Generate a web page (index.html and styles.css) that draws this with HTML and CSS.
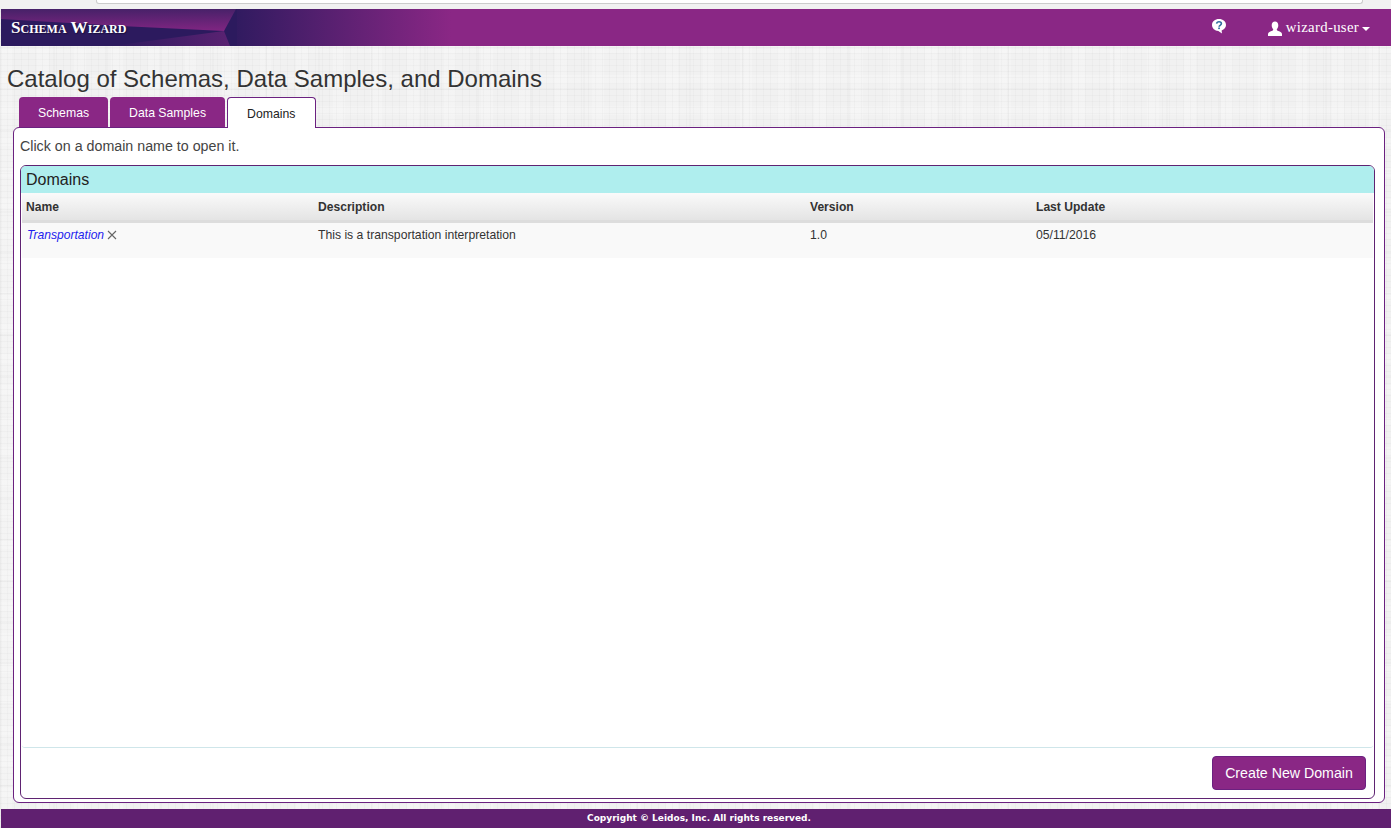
FILE: index.html
```html
<!DOCTYPE html>
<html lang="en">
<head>
  <meta charset="UTF-8">
  <meta name="viewport" content="width=device-width, initial-scale=1.0">
  <title>Schema Wizard</title>
  <link rel="stylesheet" href="styles.css">
</head>
<body>

  <div class="browser-strip"><div class="address-box"></div></div>

  <header class="navbar">
    <svg class="brand-art" viewBox="0 0 450 37" preserveAspectRatio="none" aria-hidden="true">
      <defs>
        <linearGradient id="fade" x1="0" x2="1" y1="0" y2="0">
          <stop offset="0" stop-color="#2c1a5e"/>
          <stop offset="1" stop-color="#8a2785"/>
        </linearGradient>
        <linearGradient id="wing" x1="0" x2="0.04" y1="0" y2="1">
          <stop offset="0" stop-color="#462168"/>
          <stop offset="1" stop-color="#7e2581"/>
        </linearGradient>
        <linearGradient id="wing-low" x1="0" x2="1" y1="0" y2="0">
          <stop offset="0" stop-color="#2c1a5e"/>
          <stop offset="1" stop-color="#5a2272"/>
        </linearGradient>
      </defs>
      <rect x="224" width="226" height="37" fill="url(#fade)"/>
      <rect width="236" height="37" fill="#2c1a5e"/>
      <polygon points="0,0 235,0 223,22 120,17 0,10" fill="url(#wing)"/>
      <polygon points="110,37 223,22 229,37" fill="url(#wing-low)"/>
    </svg>
    <a class="brand">Schema Wizard</a>
    <div class="nav-right">
      <svg class="help-icon" viewBox="0 0 16 16" aria-hidden="true">
        <path d="M8 1C4 1 1 3.500 1 7c0 3.300 2.800 5.800 6.300 5.900L11 15.500l-.4-3.100C13.300 11.300 15 9.400 15 7c0-3.500-3-6-7-6z" fill="#fff"/>
        <path d="M5.600 5.600C5.800 4.400 6.800 3.700 8 3.700c1.400 0 2.400.8 2.400 1.900 0 1.800-2.300 1.700-2.300 3.200" fill="none" stroke="#2f6d9e" stroke-width="1.600"/>
        <rect x="7.200" y="9.500" width="1.700" height="1.600" fill="#2f6d9e"/>
      </svg>
      <a class="user-menu">
        <svg class="user-icon" viewBox="0 0 16 16" aria-hidden="true">
          <path d="M8 .5c2 0 3.300 1.500 3.300 3.700 0 1.700-.7 3.100-1.500 4 0 1 .3 1.300 1.500 1.800 2 .8 3.700 1.400 3.700 3.200V15H1v-1.800c0-1.800 1.700-2.400 3.700-3.200 1.200-.5 1.500-.8 1.500-1.800-.8-.9-1.500-2.300-1.500-4C4.700 2 6 .5 8 .5z" fill="#fff"/>
        </svg>
        wizard-user<span class="caret"></span>
      </a>
    </div>
  </header>

  <main class="content">
    <h1>Catalog of Schemas, Data Samples, and Domains</h1>

    <ul class="tabs">
      <li class="tab">Schemas</li>
      <li class="tab">Data Samples</li>
      <li class="tab active">Domains</li>
    </ul>

    <section class="tab-panel">
      <p class="hint">Click on a domain name to open it.</p>

      <div class="domains-panel">
        <h2>Domains</h2>
        <div class="table-wrap">
          <table>
            <thead>
              <tr>
                <th class="col-name">Name</th>
                <th class="col-desc">Description</th>
                <th class="col-version">Version</th>
                <th>Last Update</th>
              </tr>
            </thead>
            <tbody>
              <tr>
                <td><a class="domain-link">Transportation</a> <svg class="remove-icon" viewBox="0 0 10 10" aria-hidden="true"><path d="M1 1l8 8M9 1L1 9" stroke="#666" stroke-width="1.100" fill="none"/></svg></td>
                <td>This is a transportation interpretation</td>
                <td>1.0</td>
                <td>05/11/2016</td>
              </tr>
            </tbody>
          </table>
        </div>
        <div class="panel-footer">
          <button>Create New Domain</button>
        </div>
      </div>
    </section>
  </main>

  <footer class="page-footer">Copyright &copy; Leidos, Inc. All rights reserved.</footer>

</body>
</html>
```

FILE: styles.css
```css
html, body {
  height: 100%;
}

body {
  margin: 0;
  height: 828px;
  overflow: hidden;
  display: flex;
  flex-direction: column;
  font-family: "Liberation Sans", Arial, sans-serif;
  color: #333;
  background-color: #f1f1f1;
  background-image:
    repeating-linear-gradient(90deg, rgba(0, 0, 0, 0.018) 0 1px, transparent 1px 7px),
    repeating-linear-gradient(0deg, rgba(0, 0, 0, 0.018) 0 1px, transparent 1px 6px),
    repeating-linear-gradient(90deg, rgba(0, 0, 0, 0.016) 0 2px, transparent 2px 53px),
    repeating-linear-gradient(0deg, rgba(0, 0, 0, 0.016) 0 2px, transparent 2px 41px),
    repeating-linear-gradient(90deg, rgba(255, 255, 255, 0.2) 0 12px, transparent 12px 37px),
    repeating-linear-gradient(0deg, rgba(255, 255, 255, 0.2) 0 9px, transparent 9px 31px);
}

/* Top strip */
.browser-strip {
  height: 9px;
  flex: none;
  background: #f1f1f1;
}

.address-box {
  height: 3px;
  margin: 0 28px 0 96px;
  background: #fff;
  border: 1px solid #ccc;
  border-top: none;
  border-radius: 0 0 3px 3px;
}

/* Navbar */
.navbar {
  position: relative;
  height: 37px;
  flex: none;
  margin-left: 1px;
  display: flex;
  align-items: center;
  justify-content: space-between;
  background: #8a2785;
  color: #fff;
}

.brand-art {
  position: absolute;
  left: 0;
  top: 0;
  width: 450px;
  height: 37px;
}

.brand {
  position: relative;
  margin: 0 0 0 10px;
  font-family: "Liberation Serif", serif;
  font-size: 17.200px;
  font-weight: bold;
  font-variant: small-caps;
  color: #fff;
  text-shadow: 1px 1px 1px #1c1040;
}

.nav-right {
  position: relative;
  display: flex;
  align-items: center;
  padding-right: 21px;
}

.help-icon {
  width: 16px;
  height: 16px;
  margin-right: 40px;
  margin-bottom: 3px;
}

.user-menu {
  display: flex;
  align-items: center;
  font-family: "Liberation Serif", serif;
  font-size: 14.800px;
  color: #fff;
  letter-spacing: 0.3px;
}

.user-icon {
  width: 16px;
  height: 16px;
  margin-right: 3px;
  margin-top: 2px;
}

.caret {
  display: inline-block;
  margin-left: 3px;
  margin-top: 2px;
  border-top: 4px solid #fff;
  border-left: 4px solid transparent;
  border-right: 4px solid transparent;
}

/* Page content */
.content {
  flex: 1;
  min-height: 0;
  display: flex;
  flex-direction: column;
  padding: 0 6px 6px 13px;
}

h1 {
  margin: 19px 0 4px -6px;
  font-size: 24px;
  font-weight: normal;
  line-height: 28px;
  color: #333;
}

.tabs {
  list-style: none;
  display: flex;
  gap: 2px;
  margin: 0 0 -1px 6px;
  padding: 0;
  position: relative;
  z-index: 1;
}

.tab {
  height: 30px;
  padding: 0 19px;
  line-height: 33px;
  font-size: 12.250px;
  color: #fff;
  background: #8a2785;
  border-radius: 4px 4px 0 0;
}

.tab.active {
  background: #fff;
  color: #222;
  border: 1px solid #6b2180;
  border-bottom: none;
  padding: 0 20px 0 19px;
  line-height: 32px;
}

.tab-panel {
  flex: 1;
  min-height: 0;
  display: flex;
  flex-direction: column;
  background: #fff;
  border: 1px solid #6b2180;
  border-radius: 6px;
  padding: 0 9px 3px 6px;
}

.hint {
  margin: 10px 0 11px;
  font-size: 14.250px;
  line-height: 16px;
  color: #444;
}

.domains-panel {
  flex: 1;
  min-height: 0;
  display: flex;
  flex-direction: column;
  border: 1px solid #5f2372;
  border-radius: 6px;
  overflow: hidden;
}

h2 {
  margin: 0;
  flex: none;
  height: 27px;
  padding-left: 5px;
  font-size: 16px;
  font-weight: normal;
  line-height: 27px;
  color: #222;
  background: #afeeee;
}

.table-wrap {
  flex: 1;
  min-height: 0;
  margin: 0 1px;
  border-bottom: 1px solid #cfe6ea;
  border-radius: 0 0 3px 3px;
}

table {
  width: 100%;
  border-collapse: collapse;
  font-size: 12.200px;
  table-layout: fixed;
}

th {
  height: 26px;
  padding: 1px 4px 0;
  box-sizing: content-box;
  font-size: 12.100px;
  text-align: left;
  font-weight: bold;
  color: #333;
  background: linear-gradient(#fafafa, #e4e4e4);
  border-bottom: 3px solid #ddd;
}

td {
  height: 36px;
  box-sizing: border-box;
  padding: 5px 4px;
  vertical-align: top;
  color: #333;
  background: #f9f9f9;
}

.col-name {
  width: 284px;
}

.col-desc {
  width: 484px;
}

.col-version {
  width: 218px;
}

.domain-link {
  margin-left: 1px;
  font-size: 12.100px;
  color: #2222ee;
  font-style: italic;
}

.remove-icon {
  width: 10px;
  height: 10px;
  vertical-align: -1px;
}

.panel-footer {
  flex: none;
  height: 50px;
  box-sizing: border-box;
  display: flex;
  justify-content: flex-end;
  padding: 8px 8px 0 0;
}

button {
  height: 34px;
  width: 154px;
  padding: 0;
  font-family: inherit;
  font-size: 14.200px;
  color: #fff;
  background: #8a2785;
  border: 1px solid #6b2180;
  border-radius: 4px;
}

/* Footer */
.page-footer {
  flex: none;
  height: 19px;
  margin-left: 1px;
  padding-left: 6px;
  font-family: "DejaVu Sans", Verdana, sans-serif;
  font-size: 9px;
  font-weight: bold;
  line-height: 19px;
  text-align: center;
  color: #fff;
  background: #602070;
}
```
